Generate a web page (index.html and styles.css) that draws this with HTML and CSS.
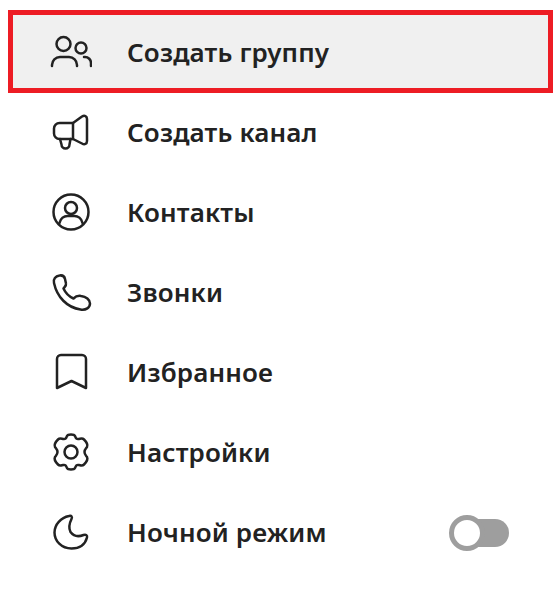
FILE: index.html
```html
<!DOCTYPE html>
<html lang="ru">
  <head>
    <meta charset="UTF-8" />
    <title>Меню</title>
    <link rel="stylesheet" href="styles.css">
  </head>
  <body>
    <ul class="menu">
      <li class="menu-item menu-item-active">
        <svg class="icon" viewBox="0 0 42 40"><circle cx="13.500" cy="11" r="7"/><circle cx="31" cy="15" r="5.500"/><path d="M2 33v-1a8 8 0 0 1 8-8h9a8 8 0 0 1 8 8v1"/><path d="M34 24h1a6 6 0 0 1 6 6v3"/></svg>
        <span class="menu-label">Создать группу</span>
      </li>
      <li class="menu-item">
        <svg class="icon" viewBox="0 0 42 40"><path d="M23 10 32 3.500c2.500-1.500 5-.5 5 2.500v22c0 3-2.500 4-5 2.500L23 26H9.500A5.500 5.500 0 0 1 4 20.500v-5A5.500 5.500 0 0 1 9.500 10z"/><path d="M23 10v16"/><path d="M10 26l1.500 5.500a4 4 0 0 0 8 0l1-5.500"/></svg>
        <span class="menu-label">Создать канал</span>
      </li>
      <li class="menu-item">
        <svg class="icon" viewBox="0 0 42 40"><circle cx="21" cy="19" r="17.500"/><circle cx="21" cy="15" r="6"/><path d="M9.500 30c1-4.500 4.500-7 8-7h7c3.500 0 7 2.500 8 7"/></svg>
        <span class="menu-label">Контакты</span>
      </li>
      <li class="menu-item">
        <svg class="icon" viewBox="0 0 42 40"><path d="M4 10c-1-4 1.500-7 5.500-7.500 3-.5 5 1 5.500 3.500l1 4.500c.5 2-1.500 3.500-2.500 5 2 4.500 5.500 8 10 10 2-2 4.500-3 7.500-2.500 5 .5 9 3.500 9 7.500 0 4-4 7-9.500 6C17 34.500 7 24 4 10z"/></svg>
        <span class="menu-label">Звонки</span>
      </li>
      <li class="menu-item">
        <svg class="icon" viewBox="0 0 42 40"><path d="M7 35V6a4 4 0 0 1 4-4h21a4 4 0 0 1 4 4v29l-14.500-7z"/></svg>
        <span class="menu-label">Избранное</span>
      </li>
      <li class="menu-item">
        <svg class="icon" viewBox="0 0 42 40"><circle cx="21" cy="19" r="6.500"/><path d="M17 3c1-2 7-2 8 0 1 2.500 1.500 3.500 4 3s3.500-1 5 .5c2 2 4 5.500 3 7.500-1 1.500-2.500 2.500-2.500 5s1.500 3.500 2.500 5c1 2-1 5.500-3 7.500-1.500 1.500-2.500 1-5 .5s-3 .5-4 3c-1 2-7 2-8 0-1-2.500-1.500-3.500-4-3s-3.500 1-5-.5c-2-2-4-5.500-3-7.500 1-1.500 2.500-2.500 2.500-5S6 15.500 5 14c-1-2 1-5.500 3-7.500C9.500 5 10.500 5.500 13 6s3-.5 4-3z"/></svg>
        <span class="menu-label">Настройки</span>
      </li>
      <li class="menu-item">
        <svg class="icon" viewBox="0 0 42 40"><path d="M19 3c2.500-1 3.500 1 2.500 3-2.500 5-3 9-1 13 3 4 8 5 13 3 2.500-1 4 .5 3.500 2.500C35 32 29 35.500 21.500 35.500 11.500 35.500 4.500 28 4.500 19.500 4.500 11.500 11 4.500 19 3z"/></svg>
        <span class="menu-label">Ночной режим</span>
        <span class="toggle"><span class="toggle-knob"></span></span>
      </li>
    </ul>
  </body>
</html>
```

FILE: styles.css
```css
body {
  margin: 0;
  background-color: #fff;
  color: #222;
  font-family: "Noto Sans", sans-serif;
}

.menu {
  list-style: none;
  margin: 0;
  padding: 10px 0 0;
}

.menu-item {
  display: flex;
  align-items: center;
  gap: 35px;
  height: 80px;
  padding: 0 44px 0 50px;
}

.menu-item-active {
  box-sizing: border-box;
  height: 83px;
  margin-left: 8px;
  padding: 3px 0 0 37px;
  border: 5px solid #ed1c24;
  background-color: #f0f0f0;
}

.icon {
  flex: none;
  width: 42px;
  height: 40px;
  fill: none;
  stroke: #222;
  stroke-width: 2.5;
  stroke-linecap: round;
  stroke-linejoin: round;
}

.menu-label {
  flex: 1;
  margin-top: -2px;
  font-size: 26px;
  font-weight: 600;
  letter-spacing: 0.15px;
}

.toggle {
  display: block;
  position: relative;
  width: 59px;
  height: 28px;
  border-radius: 14px;
  background-color: #9e9e9e;
}

.toggle-knob {
  position: absolute;
  left: -1px;
  top: -4px;
  box-sizing: border-box;
  width: 36px;
  height: 36px;
  border: 5px solid #9e9e9e;
  border-radius: 50%;
  background-color: #fff;
}
```
